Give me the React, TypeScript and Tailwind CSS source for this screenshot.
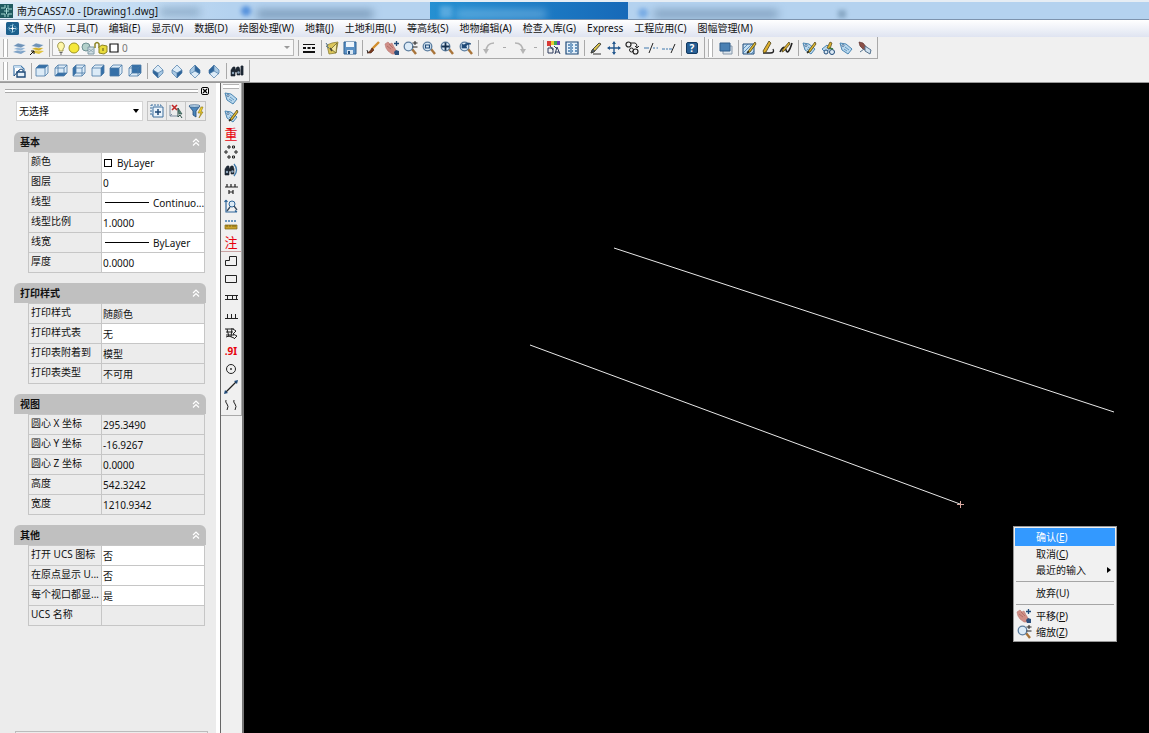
import { useState } from "react";
import type { ReactNode } from "react";

const NAVY = "#1f4a78";
const BLUE = "#3f78ad";
const PALE = "#c4dcf0";
const GOLD = "#c9a22c";

function Svg({ children }: { children: ReactNode }) {
  return (
    <svg viewBox="0 0 16 16" className="size-4 shrink-0" fill="none" stroke={NAVY} strokeWidth="1" aria-hidden="true">
      {children}
    </svg>
  );
}

const boxFaces: Record<string, string> = {
  top: "M2 5 5 2h9l-3 3z",
  bottom: "M2 13 5 10h9l-3 3z",
  left: "M2 5 5 2v8l-3 3z",
  right: "M11 5l3-3v8l-3 3z",
  front: "M2 5h9v8H2z",
  back: "M5 2h9v8H5z",
};

// view cube with one highlighted face
function Box({ face }: { face: string }) {
  return (
    <Svg>
      <path d="M2 5 5 2h9v8l-3 3H2z" fill="#dcebf7" stroke="none" />
      <path d={boxFaces[face]} fill="#3570a8" stroke="none" />
      <path d="M2 5 5 2h9v8l-3 3H2zM2 5h9v8M11 5l3-3" stroke="#4a7aa6" strokeWidth="0.8" />
      {face === "bottom" || face === "left" || face === "back" ? (
        <path d="M5 2v8h9M5 10l-3 3" stroke="#4a7aa6" strokeWidth="0.8" />
      ) : null}
    </Svg>
  );
}

function Iso({ faces }: { faces: string[] }) {
  return (
    <Svg>
      <path d="M8 2 13 7 8 10 3 7z" fill={faces[0]} stroke="none" />
      <path d="M3 7l5 3v5L3 10z" fill={faces[1]} stroke="none" />
      <path d="M13 7l-5 3v5l5-5z" fill={faces[2]} stroke="none" />
      <path d="M8 2 13 7v3l-5 5-5-5V7zM3 7l5 3 5-3M8 10v5" stroke="#4a7aa6" strokeWidth="0.7" />
    </Svg>
  );
}

// cube seen from behind: the upper corner is split into two faces
function IsoBack({ left, right }: { left: string; right: string }) {
  return (
    <Svg>
      <path d="M8 2 13 7v3l-5 5-5-5V7z" fill="#dcebf7" stroke="none" />
      <path d="M8 2v6l-5 3V7z" fill={left} stroke="none" />
      <path d="M8 2v6l5 3V7z" fill={right} stroke="none" />
      <path d="M8 2 13 7v3l-5 5-5-5V7zM8 2v6l-5 3M8 8l5 3" stroke="#4a7aa6" strokeWidth="0.7" />
    </Svg>
  );
}

function Layers({ gold }: { gold?: boolean }) {
  return (
    <Svg>
      <path d="M2 12l5-2 8 1-5 3z" fill={gold ? "#e0c341" : "#7fa3c7"} stroke="none" />
      <path d="M2 9l5-2 8 1-5 3z" fill={gold ? "#cfae2a" : "#94b4d3"} stroke="#fff" strokeWidth="0.5" />
      <path d="M2 6l5-3 8 2-5 3z" fill="#6f93b8" stroke="#fff" strokeWidth="0.5" />
      {gold ? <path d="M1 15l4-4M5 14v-3H2" stroke="#111" /> : null}
    </Svg>
  );
}

function Lens({ children }: { children?: ReactNode }) {
  return (
    <Svg>
      <path d="M10 9l4 5" stroke="#a8743a" strokeWidth="2.4" />
      <circle cx="6.500" cy="6.500" r="4.300" fill="#dcebf7" stroke="#5b7d9f" strokeWidth="1.300" />
      {children}
    </Svg>
  );
}

function Hand() {
  return (
    <Svg>
      <path d="M1 4l3-2 2 2 2-1 2 4 2 3-1 4H8L4 11 2 8z" fill="#d08e86" stroke="#b87670" strokeWidth="0.6" />
      <path d="M3 6l4 3M5 4l4 4" stroke="#a4645f" strokeWidth="0.7" />
      <path d="M12.500 1v5M10 3.500h5" stroke={NAVY} strokeWidth="1.300" />
      <path d="M10 12l2-2 3 1v4h-4z" fill="#2b4f7c" stroke="none" />
    </Svg>
  );
}

function Tag({ children }: { children?: ReactNode }) {
  return (
    <Svg>
      <path d="M2 3l6 1 6 5-4 5-6-4z" fill="#b9d8ee" stroke="#4c86b2" />
      <circle cx="5" cy="5.500" r="1" fill="#fff" stroke={NAVY} strokeWidth="0.7" />
      <path d="M7 7l4 3M6 9l3 2" stroke="#4c86b2" strokeWidth="0.8" />
      {children}
    </Svg>
  );
}

function Pencil() {
  return (
    <>
      <path d="M14 2 8 10l-2 3 3-1 6-8z" fill="#e4bd30" stroke="#4e4316" strokeWidth="0.8" />
      <path d="M6 13l1-2 1 1z" fill="#222" stroke="#222" strokeWidth="0.5" />
    </>
  );
}

function Binoculars() {
  return (
    <>
      <path d="M2 7l2-3h2v3l2-3h2l1 3v5H8V9H6v4H2z" fill="#1d2733" stroke="#1d2733" strokeWidth="0.6" />
      <circle cx="4" cy="10" r="1.200" fill="#8fa6bd" stroke="none" />
      <circle cx="9.500" cy="9.500" r="1.200" fill="#8fa6bd" stroke="none" />
    </>
  );
}

const icons: Record<string, ReactNode> = {
  layers: <Layers />,
  layerPrev: <Layers gold />,
  bulb: (
    <Svg>
      <path d="M8 2a4 4 0 0 1 2 7v2H6V9a4 4 0 0 1 2-7z" fill="#fff7a8" stroke="#8c8436" strokeWidth="0.8" />
      <path d="M6.500 12.500h3M7 14h2" stroke="#666" />
    </Svg>
  ),
  sun: (
    <Svg>
      <circle cx="8" cy="8" r="5" fill="#f5e83a" stroke="#9c9320" />
    </Svg>
  ),
  freeze: (
    <Svg>
      <circle cx="6" cy="7" r="4" fill="#b3d0ca" stroke="#6d8f91" />
      <path d="M8 7h6v7H8z" fill="#d2dfe4" stroke="#7d98a3" />
      <path d="M9 9l4 3M13 9l-4 3" stroke="#7d98a3" strokeWidth="0.7" />
    </Svg>
  ),
  lock: (
    <Svg>
      <path d="M2 8V4q2-3 4 0v4" stroke="#8d8423" strokeWidth="1.5" />
      <path d="M6 7l3-2 5 1v6l-3 2-5-1z" fill="#e8db3c" stroke="#8d8423" />
      <path d="M10 8v3" stroke="#5c5618" />
    </Svg>
  ),
  swatch: (
    <Svg>
      <path d="M4 4h8v8H4z" fill="#fff" stroke="#111" strokeWidth="1.2" />
    </Svg>
  ),
  linetype: (
    <Svg>
      <path d="M2 4.500h12" stroke="#111" />
      <path d="M2 8h12" stroke="#111" strokeWidth="2" strokeDasharray="3 1.500" />
      <path d="M2 12h12" stroke="#111" strokeWidth="2" />
    </Svg>
  ),
  open: (
    <Svg>
      <path d="M3 5l5-2 6-1-2 11-7 1z" fill="#dcc65a" stroke="#8b7f35" strokeWidth="0.8" />
      <path d="M2 3l2 3M2 6l3 2" stroke="#4e6f91" />
      <path d="M13 3 7 9l5 4z" fill="#f4e9a6" stroke="#6d6427" strokeWidth="0.8" />
      <path d="M6 8l2 3" stroke="#4b4a3c" strokeWidth="1.500" />
    </Svg>
  ),
  save: (
    <Svg>
      <path d="M2 2h12v12H2z" fill="#5a90c4" stroke="#2f6091" />
      <path d="M4 2h8v5H4z" fill="#eef5fb" stroke="none" />
      <path d="M5 10h6v4H5z" fill="#d7e5f1" stroke="none" />
      <path d="M6 11h2v3H6z" fill={NAVY} stroke="none" />
    </Svg>
  ),
  brush: (
    <Svg>
      <path d="M14 2 7 9" stroke="#d28e2e" strokeWidth="2.4" />
      <path d="M7 8l2 2-3 3H2l3-2z" fill="#7a3a1e" stroke="#4a2312" strokeWidth="0.6" />
      <path d="M2 10l1 3" stroke="#333" />
    </Svg>
  ),
  hand: <Hand />,
  zoomRt: (
    <Lens>
      <path d="M10.500 3h5M13 1v4M10.500 7h5" stroke="#222" />
    </Lens>
  ),
  zoomWin: (
    <Lens>
      <path d="M4.500 5h4v3h-4z" stroke={NAVY} strokeWidth="1.200" />
    </Lens>
  ),
  zoomExt: (
    <Lens>
      <path d="M6.500 2.500v8M2.500 6.500h8" stroke="#14304f" strokeWidth="1.8" />
    </Lens>
  ),
  zoomPrev: (
    <Lens>
      <path d="M4 8V4l2 1c3-3 6-2 7-1-3 0-5 1-5 3l1 1z" fill={NAVY} stroke={NAVY} strokeWidth="0.7" />
    </Lens>
  ),
  undo: (
    <Svg>
      <path d="M13 3C8 3 5 6 5 12" stroke="#b4b4b4" strokeWidth="1.7" />
      <path d="M2 9l3 5 3-5z" fill="#b4b4b4" stroke="none" />
    </Svg>
  ),
  redo: (
    <Svg>
      <path d="M3 3c5 0 8 3 8 9" stroke="#b4b4b4" strokeWidth="1.7" />
      <path d="M8 9l3 5 3-5z" fill="#b4b4b4" stroke="none" />
    </Svg>
  ),
  props: (
    <Svg>
      <path d="M1 1h4v5H1z" fill="#d93a35" stroke="none" />
      <path d="M5 1h3v4H5z" fill="#e8ca31" stroke="none" />
      <path d="M8 1h3v4H8z" fill="#3ba553" stroke="none" />
      <path d="M11 1h3v4h-3z" fill="#6b3fc0" stroke="none" />
      <path d="M2 8h5v5H2zM4 6l3 4M9 14l2-7 3 7M10 12h3M8 6l3 3" stroke="#2c3b5c" />
    </Svg>
  ),
  center: (
    <Svg>
      <path d="M2 2h12v12H2z" fill="#e4f0fa" stroke={NAVY} strokeWidth="1.2" />
      <path d="M4 5h2M8 5h1M11 5h2M4 8h2M8 8h1M11 8h2M4 11h2M8 11h1M11 11h2M7 3v10" stroke={BLUE} strokeWidth="1.300" />
    </Svg>
  ),
  erase: (
    <Svg>
      <path d="M12 3l2 1-7 8-3 1 1-3z" fill="#d9c24f" stroke="#4b4a3c" />
      <path d="M4 13l2-4 2 2z" fill="#54657a" stroke="#333" strokeWidth="0.5" />
      <path d="M6 14h8" stroke="#333" />
    </Svg>
  ),
  move: (
    <Svg>
      <path d="M8 2v12M2 8h12" stroke="#24598f" strokeWidth="1.4" />
      <path d="M8 1 6 4h4zM8 15l-2-3h4zM1 8l3-2v4zM15 8l-3-2v4z" fill="#24598f" stroke="none" />
    </Svg>
  ),
  copyObj: (
    <Svg>
      <circle cx="4.500" cy="4.500" r="2.500" stroke="#222" strokeWidth="1.200" />
      <circle cx="11.500" cy="11.500" r="2.500" stroke="#222" strokeWidth="1.200" />
      <circle cx="7.500" cy="10" r="2" stroke="#222" />
      <path d="M7 3h4q2 0 2 4M11 6l2 2 2-2" stroke="#222" />
    </Svg>
  ),
  trim: (
    <Svg>
      <path d="M1 8h5M10 8h2M13.500 8h1.500" stroke={BLUE} strokeWidth="1.200" />
      <path d="M10 3 6 13" stroke="#222" />
    </Svg>
  ),
  extend: (
    <Svg>
      <path d="M1 9h3M5 9h2M8 9h3" stroke={BLUE} strokeWidth="1.200" />
      <path d="M14 4l-4 9" stroke="#222" />
    </Svg>
  ),
  order: (
    <Svg>
      <path d="M5 6h9v8H5z" fill="#dbe4ec" stroke="#8496a8" />
      <path d="M2 3h10v8H2z" fill="#4a80b3" stroke="#2f5d8a" />
    </Svg>
  ),
  editHatch: (
    <Svg>
      <path d="M2 4h11v10H2z" fill="#c5dff2" stroke={NAVY} />
      <path d="M2 9l5-5M2 13l9-9M6 14l7-7M10 14l3-3" stroke={BLUE} strokeWidth="0.800" />
      <Pencil />
    </Svg>
  ),
  editPoly: (
    <Svg>
      <path d="M3 13h7q5 0 3-4" stroke="#222" strokeWidth="1.300" />
      <path d="M9 1 3 11l1 2 2-1 5-9z" fill="#dfb02e" stroke="#4e4316" strokeWidth="0.800" />
    </Svg>
  ),
  editSpline: (
    <Svg>
      <path d="M2 12q4-8 6-2t6-7" stroke="#222" strokeWidth="1.600" />
      <path d="M11 2 5 9l-1 3 2-1 6-7z" fill="#dfb02e" stroke="#4e4316" strokeWidth="0.800" />
    </Svg>
  ),
  editTag: (
    <Tag>
      <Pencil />
    </Tag>
  ),
  attMan: (
    <Svg>
      <path d="M2 9l5-4 3 3-4 5z" fill="#b9d8ee" stroke="#4c86b2" />
      <circle cx="12" cy="12" r="2.500" fill="#dceaf5" stroke={NAVY} />
      <circle cx="6" cy="12" r="2" fill="#dceaf5" stroke={NAVY} />
      <path d="M10 2 7 8l3 1 2-6z" fill="#dfb02e" stroke="#4e4316" strokeWidth="0.700" />
      <path d="M9 8l4 1" stroke="#3d7a42" strokeWidth="1.500" />
    </Svg>
  ),
  tag: <Tag />,
  extract: (
    <Svg>
      <path d="M2 2l4 1 4 5-3 2-4-4z" fill="#8b5048" stroke="#5d312c" strokeWidth="0.700" />
      <path d="M8 6l6 4-1 4-5-3z" fill="#cfe1ef" stroke="#55728e" />
      <path d="M3 12l4-3" stroke="#55728e" />
    </Svg>
  ),
  views: (
    <Svg>
      <path d="M3 13V3h7l3 3v2" fill="#fff" stroke={BLUE} strokeWidth="1.200" />
      <path d="M3 3h7v2H3z" fill={PALE} stroke="none" />
      <path d="M6 9h8v5H6z" fill="#e5f0f9" stroke={NAVY} strokeWidth="1.400" />
      <path d="M8 9V7q2-2 4 0v2M3 13l5-6" stroke={NAVY} />
    </Svg>
  ),
  find: (
    <Svg>
      <Binoculars />
      <path d="M12 3h2v9h-2z" fill="#1d2733" stroke="#1d2733" strokeWidth="0.800" />
    </Svg>
  ),
  findArc: (
    <Svg>
      <Binoculars />
      <path d="M11 2q5 6 0 12" stroke="#3d79ab" strokeWidth="1.300" />
    </Svg>
  ),
  squares: (
    <Svg>
      <path d="M5 2h2v2H5zM9.500 2h2v2h-2zM2 7h2v2H2zM12 7h2v2h-2zM5 12h2v2H5zM9.500 12h2v2h-2z" stroke="#222" />
    </Svg>
  ),
  fence: (
    <Svg>
      <path d="M2 7h13M4 4v3M8 4v3M12 4v3M6 10v4M10 10v4M6 12h4" stroke="#222" strokeWidth="1.200" />
    </Svg>
  ),
  zoomAxis: (
    <Svg>
      <path d="M3 2v12h11M3 2 1.500 4M3 2l1.500 2M14 14l-2-1.500" stroke="#2d659a" strokeWidth="1.200" />
      <circle cx="9" cy="6" r="3" fill="#dceaf5" stroke="#2d659a" />
      <path d="M11 8l3 4M7 9l-3 4" stroke="#374b60" strokeWidth="1.300" />
    </Svg>
  ),
  ruler: (
    <Svg>
      <path d="M2 5h12" stroke={BLUE} strokeDasharray="2 1" strokeWidth="1.600" />
      <path d="M2 9h12v4H2z" fill={GOLD} stroke="#7d6417" strokeWidth="0.700" />
      <path d="M4 9v2M7 9v2M10 9v2M12 9v2" stroke="#5d4a10" strokeWidth="0.700" />
    </Svg>
  ),
  polyline: (
    <Svg>
      <path d="M2.500 7.500h4v-4h7v9h-11z" stroke="#222" />
    </Svg>
  ),
  rect: (
    <Svg>
      <path d="M2.500 4.500h11v7h-11z" stroke="#222" />
    </Svg>
  ),
  wall: (
    <Svg>
      <path d="M2 6.500h13M2 10.500h13M4.500 6v5M9.500 6v5M13.500 6v5" stroke="#222" />
    </Svg>
  ),
  slope: (
    <Svg>
      <path d="M2 11.500h13M4.500 7v4M8.500 7v4M12.500 7v4" stroke="#222" />
    </Svg>
  ),
  scribble: (
    <Svg>
      <path d="M2 4h9M3 7h7M4 4l2 8M9 3l-1 9M10 4l3 2-3 3 4 2-3 3M11 13l-5-2-3 1M3 10h8" stroke="#222" />
    </Svg>
  ),
  circle: (
    <Svg>
      <circle cx="8" cy="8" r="4.500" stroke="#222" />
      <circle cx="8" cy="8" r="0.900" fill="#222" stroke="none" />
    </Svg>
  ),
  segment: (
    <Svg>
      <path d="M3 13 13 3" stroke="#222" strokeWidth="1.300" />
      <path d="M2 11l3 3-4 1zM11 2l3 3 1-4z" fill={NAVY} stroke="none" />
    </Svg>
  ),
  waves: (
    <Svg>
      <path d="M3 3q-1 2 1 4t0 6M11 3q-1 2 1 4t0 6" stroke="#222" />
    </Svg>
  ),
  box_top: <Box face="top" />,
  box_bottom: <Box face="bottom" />,
  box_left: <Box face="left" />,
  box_right: <Box face="right" />,
  box_front: <Box face="front" />,
  box_back: <Box face="back" />,
  iso_sw: <Iso faces={["#dcebf7", "#2f659a", "#a9c9e4"]} />,
  iso_se: <Iso faces={["#dcebf7", "#a9c9e4", "#2f659a"]} />,
  iso_ne: <IsoBack left="#a9c9e4" right="#2f659a" />,
  iso_nw: <IsoBack left="#2f659a" right="#a9c9e4" />,
};

const glyphs: Record<string, ReactNode> = {
  重: <span className="text-[13px] leading-4 text-red-600">重</span>,
  注: <span className="text-[13px] leading-4 text-red-600">注</span>,
  ".9": <span className="text-[10px] leading-4 font-bold text-red-600">.9I</span>,
};

function Tool({ name }: { name: string }) {
  return (
    <button type="button" aria-label={name} className="flex size-4 shrink-0 items-center justify-center hover:bg-sky-100">
      {icons[name] ?? glyphs[name]}
    </button>
  );
}

function Group({ names, className }: { names: string[]; className: string }) {
  return (
    <div className={`flex shrink-0 items-center justify-between ${className}`}>
      {names.map((n) => (
        <Tool key={n} name={n} />
      ))}
    </div>
  );
}

function Sep() {
  return <div className="mr-0.5 ml-1 h-4 w-px shrink-0 bg-[#a9a9a9]" />;
}

function Grip() {
  return <div className="mx-[3px] h-[18px] w-[5px] shrink-0 border-x border-[#b4b4b4] bg-white" />;
}

const bar = "flex h-[22px] items-center border-r border-b border-[#a9a9a9] bg-[#f1f1f1]";

const menus = [
  "文件(F)", "工具(T)", "编辑(E)", "显示(V)", "数据(D)", "绘图处理(W)", "地籍(J)",
  "土地利用(L)", "等高线(S)", "地物编辑(A)", "检查入库(G)", "Express", "工程应用(C)", "图幅管理(M)",
];

type Row = { label: string; value: string; kind?: "swatch" | "line"; edit?: boolean };

const sections: { title: string; rows: Row[] }[] = [
  {
    title: "基本",
    rows: [
      { label: "颜色", value: "ByLayer", kind: "swatch", edit: true },
      { label: "图层", value: "0", edit: true },
      { label: "线型", value: "Continuo...", kind: "line", edit: true },
      { label: "线型比例", value: "1.0000", edit: true },
      { label: "线宽", value: "ByLayer", kind: "line", edit: true },
      { label: "厚度", value: "0.0000", edit: true },
    ],
  },
  {
    title: "打印样式",
    rows: [
      { label: "打印样式", value: "随颜色" },
      { label: "打印样式表", value: "无", edit: true },
      { label: "打印表附着到", value: "模型" },
      { label: "打印表类型", value: "不可用" },
    ],
  },
  {
    title: "视图",
    rows: [
      { label: "圆心 X 坐标", value: "295.3490" },
      { label: "圆心 Y 坐标", value: "-16.9267" },
      { label: "圆心 Z 坐标", value: "0.0000" },
      { label: "高度", value: "542.3242" },
      { label: "宽度", value: "1210.9342" },
    ],
  },
  {
    title: "其他",
    rows: [
      { label: "打开 UCS 图标", value: "否", edit: true },
      { label: "在原点显示 U...", value: "否", edit: true },
      { label: "每个视口都显...", value: "是", edit: true },
      { label: "UCS 名称", value: "" },
    ],
  },
];

function Value({ row, id }: { row: Row; id: string }) {
  if (row.kind) {
    return (
      <button id={id} type="button" className="flex h-[19px] w-full items-center whitespace-nowrap">
        {row.kind === "swatch" ? (
          <span className="mr-[5px] ml-px size-2 border border-black" />
        ) : (
          <span className="mr-1 ml-0.5 h-px w-11 shrink-0 bg-black" />
        )}
        {row.value}
      </button>
    );
  }
  if (row.edit) {
    return <input id={id} defaultValue={row.value} className="block h-[19px] w-full bg-transparent outline-none" />;
  }
  return <span id={id}>{row.value}</span>;
}

function Section({ title, rows }: { title: string; rows: Row[] }) {
  const [open, setOpen] = useState(true);

  return (
    <section className="mb-2.5">
      <button
        type="button"
        aria-expanded={open}
        onClick={() => setOpen(!open)}
        className="flex h-5 w-full items-center justify-between rounded-t-md bg-[#c0c0c0] px-1.5 font-bold"
      >
        {title}
        <svg viewBox="0 0 8 8" className="size-2" fill="none" stroke="#fff" strokeWidth="1.2" aria-hidden="true">
          <path d="M1 4l3-3 3 3M1 7.500l3-3 3 3" />
        </svg>
      </button>
      {open ? (
        <div className="pr-px pl-3.5">
          <table className="w-full table-fixed border-collapse">
            <tbody>
              {rows.map((row, i) => (
                <tr key={row.label} className="h-5">
                  <th className="w-[73px] border border-[#c6c6c6] p-0 pb-[3px] pl-0.5 text-left font-normal whitespace-nowrap">
                    {row.edit ? <label htmlFor={`${title}-${i}`}>{row.label}</label> : row.label}
                  </th>
                  <td className={`border border-[#c6c6c6] p-0 pl-px ${row.edit ? "bg-white" : ""}`}>
                    <Value row={row} id={`${title}-${i}`} />
                  </td>
                </tr>
              ))}
            </tbody>
          </table>
        </div>
      ) : null}
    </section>
  );
}

function Properties() {
  return (
    <aside className="flex w-[216px] shrink-0 flex-col overflow-hidden bg-[#ececec]">
      <div className="flex items-center gap-[3px] pt-1 pr-[7px] pl-[5px]">
        <div className="h-1 flex-1 border-y border-[#aaa] bg-white" />
        <button type="button" aria-label="关闭" className="flex size-2 items-center justify-center rounded-xs border border-black bg-white">
          <svg viewBox="0 0 6 6" className="size-1.5" stroke="#000" strokeWidth="1.3" aria-hidden="true">
            <path d="M1 1l4 4M5 1 1 5" />
          </svg>
        </button>
      </div>
      <div className="mt-1.5 flex items-center gap-1 pr-2.5 pl-4">
        <div className="relative flex-1">
          <select aria-label="选择" className="block h-5 w-full appearance-none border border-[#d4d4d4] bg-white pl-0.5 outline-none">
            <option>无选择</option>
          </select>
          <span className="pointer-events-none absolute top-2 right-1 border-x-[3px] border-t-4 border-x-transparent border-t-black" />
        </div>
        <div className="flex divide-x divide-[#c4c4c4] border border-[#c4c4c4]">
          <button type="button" aria-label="PICKADD" className="flex h-[18px] w-[19px] items-center justify-center">
            <Svg>
              <path d="M2 2h10v10H2z" fill="#dceaf6" stroke="#3f6f9c" strokeDasharray="2 1" />
              <path d="M4 4h10v10H4z" fill="#eaf3fb" stroke="#3f6f9c" />
              <path d="M9 6v6M6 9h6" stroke={NAVY} strokeWidth="1.5" />
            </Svg>
          </button>
          <button type="button" aria-label="选择对象" className="flex h-[18px] w-[19px] items-center justify-center">
            <Svg>
              <path d="M2 2v11h8M2 13l2-2" stroke="#7f8ea0" />
              <path d="M4 2l5 5M9 2 4 7" stroke="#c02626" strokeWidth="1.6" />
              <path d="M10 5v9l2-2 2 3" fill="#fff" stroke="#2d4f48" />
              <path d="M10 5l4 6h-3z" fill="#5c8c7e" stroke="#2d4f48" strokeWidth="0.7" />
            </Svg>
          </button>
          <button type="button" aria-label="快速选择" className="flex h-[18px] w-[19px] items-center justify-center">
            <Svg>
              <path d="M1 3h11L8 8v6l-3-2V8z" fill="#4b86bb" stroke={NAVY} strokeWidth="0.8" />
              <ellipse cx="6.500" cy="3" rx="5.500" ry="1.300" fill="#bcd7ec" stroke={NAVY} strokeWidth="0.6" />
              <path d="M13 4l-3 6h3l-2 5 4-6h-2l2-5z" fill="#f0cf2b" stroke="#8a7413" strokeWidth="0.6" />
            </Svg>
          </button>
        </div>
      </div>
      <div className="mt-[11px] flex-1 pr-2.5 pl-3.5">
        {sections.map((s) => (
          <Section key={s.title} {...s} />
        ))}
      </div>
      <div className="mr-2 ml-[15px] h-0.5 border-x border-t border-[#bcbcbc]" />
    </aside>
  );
}

function ContextMenu() {
  const row = "flex h-4 w-full items-center pr-1 text-left";
  const rule = "mx-px my-[3px] h-px bg-[#a5a5a5]";
  return (
    <div className="absolute top-[443px] left-[769px] w-26 border border-[#979797] bg-[#f1f1f1] p-px">
      <button type="button" className="flex h-[18px] w-full items-center bg-[#3399ff] pl-[21px] text-white">
        确认(<u>E</u>)
      </button>
      <button type="button" className={`${row} pl-[21px]`}>
        取消(<u>C</u>)
      </button>
      <button type="button" className={`${row} pl-[21px]`}>
        <span className="flex-1">最近的输入</span>
        <span className="border-y-[3px] border-l-4 border-y-transparent border-l-black" />
      </button>
      <div className={rule} />
      <button type="button" className="flex h-4 w-full items-center pl-[21px]">
        放弃(U)
      </button>
      <div className={rule} />
      <button type="button" className={`${row} gap-1 pl-px`}>
        <Hand />
        <span>
          平移(<u>P</u>)
        </span>
      </button>
      <button type="button" className={`${row} gap-1 pl-px`}>
        {icons.zoomRt}
        <span>
          缩放(<u>Z</u>)
        </span>
      </button>
    </div>
  );
}

export default function App() {
  return (
    <div className="flex h-screen flex-col overflow-hidden bg-[#f0f0f0] font-['Noto_Sans','Noto_Sans_CJK_SC',sans-serif] text-[10px] leading-4 text-[#111]">
      <header className="relative flex h-5 shrink-0 items-center gap-1 overflow-hidden border-t-2 border-b border-t-[#e6edf4] border-b-[#7d93ad] bg-gradient-to-r from-[#dcebf8] via-[#b4d2ef] via-20% to-[#b4d2ef]">
        {/* desktop tabs seen through the glass frame */}
        <div className="absolute inset-y-0 left-[430px] w-[198px] bg-gradient-to-r from-[#2590d2] to-[#1769b8]" />
        <div className="absolute top-1.5 left-[160px] h-2 w-10 bg-[#5d7f9f]/50 blur-xs" />
        <div className="absolute top-1 left-[241px] size-2.5 rounded-full bg-[#3f82d8]/80 blur-[2px]" />
        <div className="absolute top-2 left-[257px] h-2 w-[116px] bg-[#4f708f]/60 blur-xs" />
        <div className="absolute top-1 left-[440px] size-3 bg-[#8bc6ee]/50 blur-[2px]" />
        <div className="absolute top-2 left-[456px] h-2 w-[90px] bg-[#a3d3f2]/50 blur-xs" />
        <div className="absolute top-1.5 left-[638px] size-2.5 rounded-full bg-[#5f9be0]/70 blur-[2px]" />
        <div className="absolute top-2 left-[654px] h-2 w-[124px] bg-[#5c7d9c]/60 blur-xs" />
        <div className="absolute top-2 left-[838px] size-2 bg-[#5c7d9c]/50 blur-[2px]" />
        <svg viewBox="0 0 13 14" className="relative h-3.5 w-[13px]" aria-hidden="true">
          <path d="M0 0h13v14H0z" fill="#1f5a60" />
          <path d="M1 4h4V1M8 1v4h4M1 10h4v3M8 13v-3h4M6.500 4v6M4 7h5" stroke="#a5d8d3" fill="none" />
        </svg>
        <h1 className="relative">南方CASS7.0 - [Drawing1.dwg]</h1>
      </header>

      <nav className="flex h-[17px] shrink-0 items-center gap-[11px] bg-gradient-to-b from-white to-[#dfe4f1] pb-px pl-1.5 whitespace-nowrap">
        <svg viewBox="0 0 13 13" className="-mr-1.5 size-[13px] shrink-0" aria-hidden="true">
          <rect width="13" height="13" rx="1.500" fill="#1c5f8c" />
          <path d="M6.500 2 11 6.500 6.500 11 2 6.500z" stroke="#8fd0ea" strokeDasharray="1.500 1" fill="none" />
          <path d="M6.500 3v7M3 6.500h7" stroke="#d3f1fa" strokeWidth="0.800" fill="none" />
          <path d="M6.500 5 8 6.500 6.500 8 5 6.500z" fill="#fff" />
        </svg>
        {menus.map((m) => (
          <button key={m} type="button" className="hover:bg-sky-200">
            {m}
          </button>
        ))}
      </nav>

      <div className="flex h-[22px] shrink-0">
        <div className={bar}>
          <Grip />
          <Group names={["layers", "layerPrev"]} className="w-[34px]" />
          <div className="mr-0.5 ml-1 h-[18px] w-px bg-[#a9a9a9]" />
          <div className="relative flex h-[17px] w-[242px] items-center border border-[#b8b8b8] bg-[#f7f7f7]">
            <div className="flex w-[66px] justify-between">
              {["bulb", "sun", "freeze", "lock", "swatch"].map((n) => (
                <span key={n} className="-mr-[3px]">
                  {icons[n]}
                </span>
              ))}
            </div>
            <select aria-label="图层" className="h-full flex-1 appearance-none pl-[3px] text-[#777] outline-none">
              <option>0</option>
            </select>
            <span className="pointer-events-none absolute top-1.5 right-[3px] border-x-[3px] border-t-[3px] border-x-transparent border-t-[#9a9a9a]" />
          </div>
          <Sep />
          <Group names={["linetype"]} className="w-4" />
          <Sep />
          <Group names={["open", "save"]} className="w-[34px]" />
          <Sep />
          <Group names={["brush", "hand", "zoomRt", "zoomWin", "zoomExt", "zoomPrev"]} className="w-[109px]" />
          <Sep />
          <Tool name="undo" />
          <span className="mx-1.5 h-px w-[3px] bg-[#aaa]" />
          <Tool name="redo" />
          <span className="mx-1.5 h-px w-[3px] bg-[#aaa]" />
          <div className="mr-0.5 h-4 w-px bg-[#a9a9a9]" />
          <Group names={["props", "center"]} className="w-[34px]" />
          <Sep />
          <Group names={["erase", "move", "copyObj", "trim", "extend"]} className="w-[90px]" />
          <Sep />
          <button type="button" aria-label="help" className="mr-1 flex size-4 items-center justify-center">
            <span className="flex size-3 items-center justify-center rounded-xs border border-[#123a61] bg-[#275f94] font-bold text-white">
              ?
            </span>
          </button>
        </div>
        <div className={bar}>
          <Grip />
          <Group names={["order"]} className="ml-0.5 w-4" />
          <Sep />
          <Group names={["editHatch", "editPoly", "editSpline"]} className="w-[53px]" />
          <Sep />
          <Group names={["editTag", "attMan", "tag", "extract"]} className="mr-1 w-[72px]" />
        </div>
      </div>

      <div className="flex h-[23px] shrink-0 items-end">
        <div className={bar}>
          <Grip />
          <Group names={["views"]} className="w-4" />
          <Sep />
          <Group names={["box_top", "box_bottom", "box_left", "box_right", "box_front", "box_back"]} className="w-[109px]" />
          <Sep />
          <Group names={["iso_sw", "iso_se", "iso_ne", "iso_nw"]} className="w-[72px]" />
          <Sep />
          <Group names={["find"]} className="mr-1 w-4" />
        </div>
      </div>

      <div className="flex min-h-0 flex-1 border-t border-[#9a9a9a]">
        <Properties />
        <div className="w-1 shrink-0 bg-white" />
        <div className="w-6 shrink-0 border-r-2 border-l border-r-[#777] border-l-[#666] bg-[#f0f0f0]">
          <div className="flex flex-col items-center gap-0.5 border-r border-b border-[#a9a9a9] pb-0.5">
            <div className="mt-px -mb-px h-[5px] w-4 border-y border-[#b4b4b4] bg-white" />
            {["tag", "editTag", "重", "squares", "findArc", "fence", "zoomAxis", "ruler", "注"].map((n) => (
              <Tool key={n} name={n} />
            ))}
            <div className="-my-px h-px w-full bg-[#c9a3a3]" />
            {["polyline", "rect", "wall", "slope", "scribble", ".9", "circle", "segment", "waves"].map((n) => (
              <Tool key={n} name={n} />
            ))}
          </div>
        </div>
        <main className="relative flex-1 overflow-hidden bg-black">
          <svg className="absolute inset-0 size-full" stroke="#e8e8e8" strokeWidth="1" aria-hidden="true">
            <path d="M370 165 870 329M286 262 716 421" />
            <path d="M713 421.500h7M716.500 418v7" stroke="#d8a8a0" />
          </svg>
          <ContextMenu />
        </main>
      </div>
    </div>
  );
}
